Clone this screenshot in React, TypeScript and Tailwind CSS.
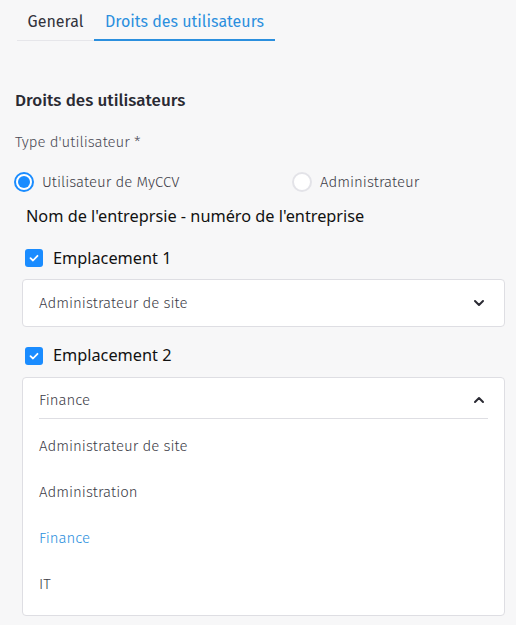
import { useState } from "react";

const sans = "font-['Fira_Sans','Lato','Noto_Sans',sans-serif]";
const body = "font-['Noto_Sans','Open_Sans',sans-serif]";

function Chevron({ up }: { up?: boolean }) {
  return (
    <svg width="14" height="14" viewBox="0 0 14 14" className="text-[#2a2a33]">
      <path
        d={up ? "M3 9 L7 5 L11 9" : "M3 5 L7 9 L11 5"}
        fill="none"
        stroke="currentColor"
        strokeWidth="2"
        strokeLinecap="round"
        strokeLinejoin="round"
      />
    </svg>
  );
}

function Check({ label }: { label: string }) {
  return (
    <div className="flex items-center gap-[10px] pl-[25px]">
      <span className="flex h-[18px] w-[18px] items-center justify-center rounded-[3px] bg-[#1a8cff]">
        <svg width="12" height="12" viewBox="0 0 12 12">
          <path d="M2.5 6.2 L5 8.5 L9.5 3.8" fill="none" stroke="white" strokeWidth="1.8" strokeLinecap="round" strokeLinejoin="round" />
        </svg>
      </span>
      <span className={`${body} text-[16.3px] text-[#111]`}>{label}</span>
    </div>
  );
}

export default function App() {
  const [type, setType] = useState("user");
  const options = ["Administrateur de site", "Administration", "Finance", "IT"];

  return (
    <div className={`min-h-[625px] w-[516px] bg-[#f7f7f8] ${sans}`}>
      <div className="flex pl-[17px] pt-[4px]">
        <div className="flex h-[37px] w-[77px] items-center justify-center border-b border-[#e6e6ea] text-[16px] text-[#33333c]">
          General
        </div>
        <div className="flex h-[37px] w-[181px] items-center justify-center border-b-2 border-[#2b8fde] text-[16px] text-[#2b8fde]">
          Droits des utilisateurs
        </div>
      </div>

      <h2 className="mt-[47px] pl-[15px] text-[17px] font-medium text-[#2a2a33]">Droits des utilisateurs</h2>
      <p className="mt-[17px] pl-[15px] text-[15px] font-light text-[#4a4a55]">Type d'utilisateur *</p>

      <div className="mt-[18px] flex pl-[14px]">
        <button onClick={() => setType("user")} className="flex w-[278px] items-center gap-[8px] text-[15px] font-light text-[#3c3c47]">
          <span className={`flex h-[20px] w-[20px] items-center justify-center rounded-full border-2 bg-white ${type === "user" ? "border-[#1a8cff]" : "border-[#e3e3e8]"}`}>
            {type === "user" && <span className="h-[12px] w-[12px] rounded-full bg-[#1a8cff]" />}
          </span>
          Utilisateur de MyCCV
        </button>
        <button onClick={() => setType("admin")} className="flex items-center gap-[8px] text-[15px] font-light text-[#3c3c47]">
          <span className={`flex h-[20px] w-[20px] items-center justify-center rounded-full border-2 bg-white ${type === "admin" ? "border-[#1a8cff]" : "border-[#e3e3e8]"}`}>
            {type === "admin" && <span className="h-[12px] w-[12px] rounded-full bg-[#1a8cff]" />}
          </span>
          Administrateur
        </button>
      </div>

      <p className={`${body} mt-[10px] pl-[26px] text-[16.3px] text-[#111]`}>Nom de l'entreprsie - numéro de l'entreprise</p>

      <div className="mt-[18px]">
        <Check label="Emplacement 1" />
      </div>
      <div className="ml-[22px] mr-[11px] mt-[9px] flex h-[48px] items-center justify-between rounded-[4px] border border-[#dedee3] bg-white pl-[16px] pr-[18px] text-[15px] font-light text-[#3c3c47]">
        Administrateur de site
        <Chevron />
      </div>

      <div className="mt-[16px]">
        <Check label="Emplacement 2" />
      </div>
      <div className="ml-[22px] mr-[11px] mt-[9px] rounded-[4px] border border-[#dedee3] bg-white px-[16px] pb-[8px] font-light">
        <div className="flex h-[41px] items-center justify-between border-b border-[#dedee3] pr-[2px] pt-[5px] text-[15px] text-[#3c3c47]">
          Finance
          <Chevron up />
        </div>
        <div className="pt-[4px]">
          {options.map((o) => (
            <div key={o} className={`flex h-[46px] items-center text-[15px] ${o === "Finance" ? "text-[#2b8fde]" : "text-[#3c3c47]"}`}>
              {o}
            </div>
          ))}
        </div>
      </div>
    </div>
  );
}
